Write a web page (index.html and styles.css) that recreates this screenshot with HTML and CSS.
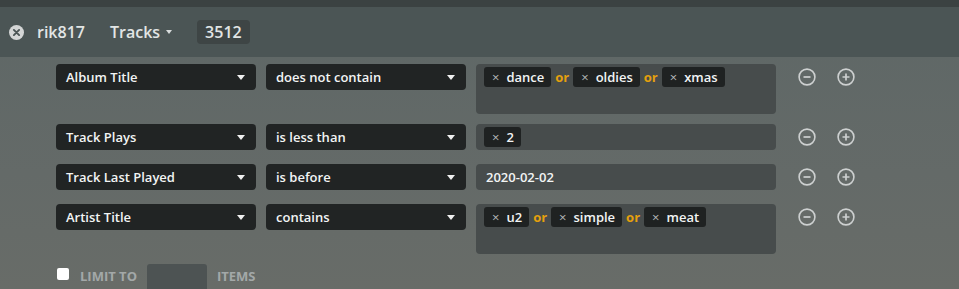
FILE: index.html
```html
<!DOCTYPE html>
<html lang="en">
<head>
  <meta charset="UTF-8">
  <title>Smart playlist filters</title>
  <link rel="stylesheet" href="styles.css">
</head>
<body>
  <div class="topstrip"></div>
  <header class="bar">
    <svg class="close" width="15" height="15" viewBox="0 0 16 16">
      <circle cx="8" cy="8" r="8" fill="#d4d6d6"/>
      <path d="M5.2 5.2 L10.8 10.8 M10.8 5.2 L5.2 10.8" stroke="#4a5454" stroke-width="2" stroke-linecap="round"/>
    </svg>
    <span class="user">rik817</span>
    <span class="type">Tracks <i class="caret-sm"></i></span>
    <span class="count">3512</span>
  </header>

  <main class="filters">
    <div class="row multi">
      <div class="select">Album Title <i class="caret"></i></div>
      <div class="select">does not contain <i class="caret"></i></div>
      <div class="value">
        <span class="tag"><b>&times;</b>dance</span><span class="or">or</span>
        <span class="tag"><b>&times;</b>oldies</span><span class="or">or</span>
        <span class="tag"><b>&times;</b>xmas</span>
      </div>
      <div class="actions">
        <svg width="18" height="18" viewBox="0 0 18 18"><circle cx="9" cy="9" r="7.9" fill="none" stroke="#cdd0d0" stroke-width="1.6"/><path d="M5.5 9 H12.5" stroke="#cdd0d0" stroke-width="1.7"/></svg>
        <svg width="18" height="18" viewBox="0 0 18 18"><circle cx="9" cy="9" r="7.9" fill="none" stroke="#cdd0d0" stroke-width="1.6"/><path d="M5.5 9 H12.5 M9 5.5 V12.5" stroke="#cdd0d0" stroke-width="1.7"/></svg>
      </div>
    </div>

    <div class="row">
      <div class="select">Track Plays <i class="caret"></i></div>
      <div class="select">is less than <i class="caret"></i></div>
      <div class="value">
        <span class="tag"><b>&times;</b>2</span>
      </div>
      <div class="actions">
        <svg width="18" height="18" viewBox="0 0 18 18"><circle cx="9" cy="9" r="7.9" fill="none" stroke="#cdd0d0" stroke-width="1.6"/><path d="M5.5 9 H12.5" stroke="#cdd0d0" stroke-width="1.7"/></svg>
        <svg width="18" height="18" viewBox="0 0 18 18"><circle cx="9" cy="9" r="7.9" fill="none" stroke="#cdd0d0" stroke-width="1.6"/><path d="M5.5 9 H12.5 M9 5.5 V12.5" stroke="#cdd0d0" stroke-width="1.7"/></svg>
      </div>
    </div>

    <div class="row">
      <div class="select">Track Last Played <i class="caret"></i></div>
      <div class="select">is before <i class="caret"></i></div>
      <div class="value text">2020-02-02</div>
      <div class="actions">
        <svg width="18" height="18" viewBox="0 0 18 18"><circle cx="9" cy="9" r="7.9" fill="none" stroke="#cdd0d0" stroke-width="1.6"/><path d="M5.5 9 H12.5" stroke="#cdd0d0" stroke-width="1.7"/></svg>
        <svg width="18" height="18" viewBox="0 0 18 18"><circle cx="9" cy="9" r="7.9" fill="none" stroke="#cdd0d0" stroke-width="1.6"/><path d="M5.5 9 H12.5 M9 5.5 V12.5" stroke="#cdd0d0" stroke-width="1.7"/></svg>
      </div>
    </div>

    <div class="row multi">
      <div class="select">Artist Title <i class="caret"></i></div>
      <div class="select">contains <i class="caret"></i></div>
      <div class="value">
        <span class="tag"><b>&times;</b>u2</span><span class="or">or</span>
        <span class="tag"><b>&times;</b>simple</span><span class="or">or</span>
        <span class="tag"><b>&times;</b>meat</span>
      </div>
      <div class="actions">
        <svg width="18" height="18" viewBox="0 0 18 18"><circle cx="9" cy="9" r="7.9" fill="none" stroke="#cdd0d0" stroke-width="1.6"/><path d="M5.5 9 H12.5" stroke="#cdd0d0" stroke-width="1.7"/></svg>
        <svg width="18" height="18" viewBox="0 0 18 18"><circle cx="9" cy="9" r="7.9" fill="none" stroke="#cdd0d0" stroke-width="1.6"/><path d="M5.5 9 H12.5 M9 5.5 V12.5" stroke="#cdd0d0" stroke-width="1.7"/></svg>
      </div>
    </div>

    <div class="limit">
      <span class="check"></span>
      <span class="label">Limit to</span>
      <span class="num"></span>
      <span class="label">Items</span>
    </div>
  </main>
</body>
</html>
```

FILE: styles.css
```css
body {
  margin: 0;
  height: 289px;
  overflow: hidden;
  font-family: 'Open Sans', sans-serif;
  font-weight: 600;
  color: #f2f4f4;
  background: linear-gradient(180deg, #5e6766 0%, #646a68 60%, #686c68 100%);
}

.topstrip {
  height: 7px;
  background: #3b4242;
}

.bar {
  height: 50px;
  display: flex;
  align-items: center;
  padding-left: 9px;
  background: #4b5555;
  font-size: 16px;
  color: #e2e5e5;
}

.close {
  margin-right: 13px;
}

.user {
  margin-right: 25px;
}

.type {
  display: flex;
  align-items: center;
  margin-right: 25px;
}

.caret-sm {
  margin-left: 6px;
  border-left: 3.5px solid transparent;
  border-right: 3.5px solid transparent;
  border-top: 4px solid #d8dcdc;
}

.count {
  background: #3e4545;
  border-radius: 4px;
  padding: 0 8px;
  height: 24px;
  line-height: 24px;
}

.filters {
  padding: 7px 0 0 56px;
}

.row {
  display: flex;
  align-items: flex-start;
  gap: 10px;
  height: 40px;
  font-size: 13px;
}

.row.multi {
  height: 60px;
}

.select {
  width: 200px;
  height: 26px;
  box-sizing: border-box;
  padding: 0 11px 0 10px;
  display: flex;
  align-items: center;
  justify-content: space-between;
  background: #212424;
  border-radius: 4px;
}

.caret {
  border-left: 4px solid transparent;
  border-right: 4px solid transparent;
  border-top: 5px solid #f0f0f0;
}

.value {
  width: 300px;
  height: 26px;
  box-sizing: border-box;
  padding: 3px 8px;
  display: flex;
  align-items: flex-start;
  gap: 4px;
  background: #474c4c;
  border-radius: 4px;
}

.multi .value {
  height: 50px;
}

.value.text {
  align-items: center;
  padding: 0 10px;
}

.tag {
  display: flex;
  align-items: center;
  height: 20px;
  padding: 0 7px 0 8px;
  background: #1f2222;
  border-radius: 3px;
}

.tag b {
  font-weight: 400;
  color: #b4b8b8;
  margin-right: 7px;
  font-size: 13px;
}

.or {
  color: #e5a00d;
  font-weight: 700;
  line-height: 20px;
}

.actions {
  display: flex;
  gap: 21px;
  margin: 4px 0 0 12px;
}

.limit {
  display: flex;
  align-items: flex-start;
  font-size: 13px;
  font-weight: 700;
  text-transform: uppercase;
  color: #a3a8a8;
}

.check {
  width: 12px;
  height: 12px;
  margin: 4px 11px 0 1px;
  background: #fff;
  border-radius: 2px;
}

.label {
  line-height: 20px;
  margin-top: 2px;
}

.num {
  width: 60px;
  height: 30px;
  margin: 0 10px;
  background: #4d5353;
  border-radius: 3px;
}
```
